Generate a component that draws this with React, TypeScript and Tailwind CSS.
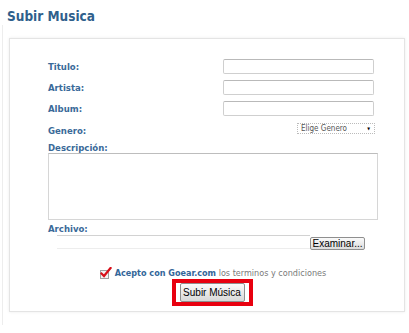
import React from "react";

const font = { fontFamily: '"DejaVu Sans Condensed", "DejaVu Sans", Verdana, sans-serif' };

function Label({ children }: { children: React.ReactNode }) {
  return (
    <span className="text-[9.5px] font-bold text-[#3a6a99] leading-[12px]">{children}</span>
  );
}

function TextInput() {
  return (
    <div className="w-[151px] h-[15px] mr-[4px] border border-[#cfcfcf] border-t-[#b9b9b9] rounded-[2px] bg-white" />
  );
}

function CheckIcon() {
  return (
    <svg width="12" height="12" viewBox="0 0 12 12" className="mr-[3px]">
      <rect x="0.5" y="3.5" width="8" height="8" fill="#f4f4f4" stroke="#a0a0a0" />
      <path d="M1.5 6.5 L4 9 L10.5 1" fill="none" stroke="#d8101a" strokeWidth="2.2" strokeLinecap="square" />
    </svg>
  );
}

export default function App() {
  return (
    <div className="w-[409px] h-[333px] bg-white overflow-hidden" style={font}>
      <div className="pt-[8px] pl-[7px] h-[25px]">
        <h1 className="text-[13.5px] font-bold text-[#2f5f8c] leading-[17px]">Subir Musica</h1>
      </div>
      <div className="ml-[2px] border-l border-[#ededed] h-[300px] pl-[6px] pt-[13px]">
        <div className="w-[396px] border border-[#e4e4e4] shadow-[0_0_3px_rgba(0,0,0,0.08)] bg-white pl-[38px] pr-[26px] pt-[20px] pb-[5px]">
          <div className="flex flex-col">
            <div className="flex items-center justify-between h-[15px]">
              <Label>Titulo:</Label>
              <TextInput />
            </div>
            <div className="flex items-center justify-between h-[15px] mt-[6px]">
              <Label>Artista:</Label>
              <TextInput />
            </div>
            <div className="flex items-center justify-between h-[15px] mt-[6px]">
              <Label>Album:</Label>
              <TextInput />
            </div>
            <div className="flex items-center justify-between h-[12px] mt-[6px]">
              <span className="mt-[2px]"><Label>Genero:</Label></span>
              <div className="w-[78px] h-[11px] mr-[3px] border border-dotted border-[#bbbbbb] flex items-center justify-between pl-[3px] pr-[4px]">
                <span className="text-[8px] text-[#555] leading-[9px]">Elige Genero</span>
                <span className="text-[4px] text-black leading-[9px]">▼</span>
              </div>
            </div>
            <div className="mt-[9px] h-[10px] flex items-center">
              <Label>Descripción:</Label>
            </div>
            <div className="h-[67px] border border-[#d6d6d6] border-t-[#bdbdbd] bg-white" />
            <div className="mt-[4px] h-[10px] flex items-center">
              <Label>Archivo:</Label>
            </div>
            <div className="flex items-start h-[15px] mt-[1px] pl-[9px]">
              <div className="w-[253px] h-[14px] border-t border-[#d2d2d2] border-b border-b-[#ededed]" />
              <button
                className="mt-[2px] w-[55px] h-[13px] border border-[#8f8f8f] rounded-[2px] bg-gradient-to-b from-[#fafafa] to-[#dcdcdc] text-[10px] text-black leading-[11px] flex items-center justify-center"
                style={{ fontFamily: '"Liberation Sans", Arial, sans-serif' }}
              >
                Examinar...
              </button>
            </div>
            <div className="mt-[17px] flex items-center justify-center h-[11px]">
              <CheckIcon />
              <span className="text-[9px] leading-[12px]">
                <span className="font-bold text-[#336699]">Acepto con Goear.com</span>
                <span className="text-[#7a7a7a]"> los terminos y condiciones</span>
              </span>
            </div>
            <div className="mt-[1px] flex justify-center">
              <div className="border-[4px] border-[#e8000f] px-[4px] pb-0 mr-[2px]">
                <button
                  className="w-[65px] h-[19px] border border-[#8f8f8f] rounded-[2px] bg-gradient-to-b from-[#fbfbfb] to-[#d8d8d8] text-[10px] text-black leading-[12px] flex items-center justify-center"
                  style={{ fontFamily: '"Liberation Sans", Arial, sans-serif' }}
                >
                  Subir Música
                </button>
              </div>
            </div>
          </div>
        </div>
      </div>
    </div>
  );
}
